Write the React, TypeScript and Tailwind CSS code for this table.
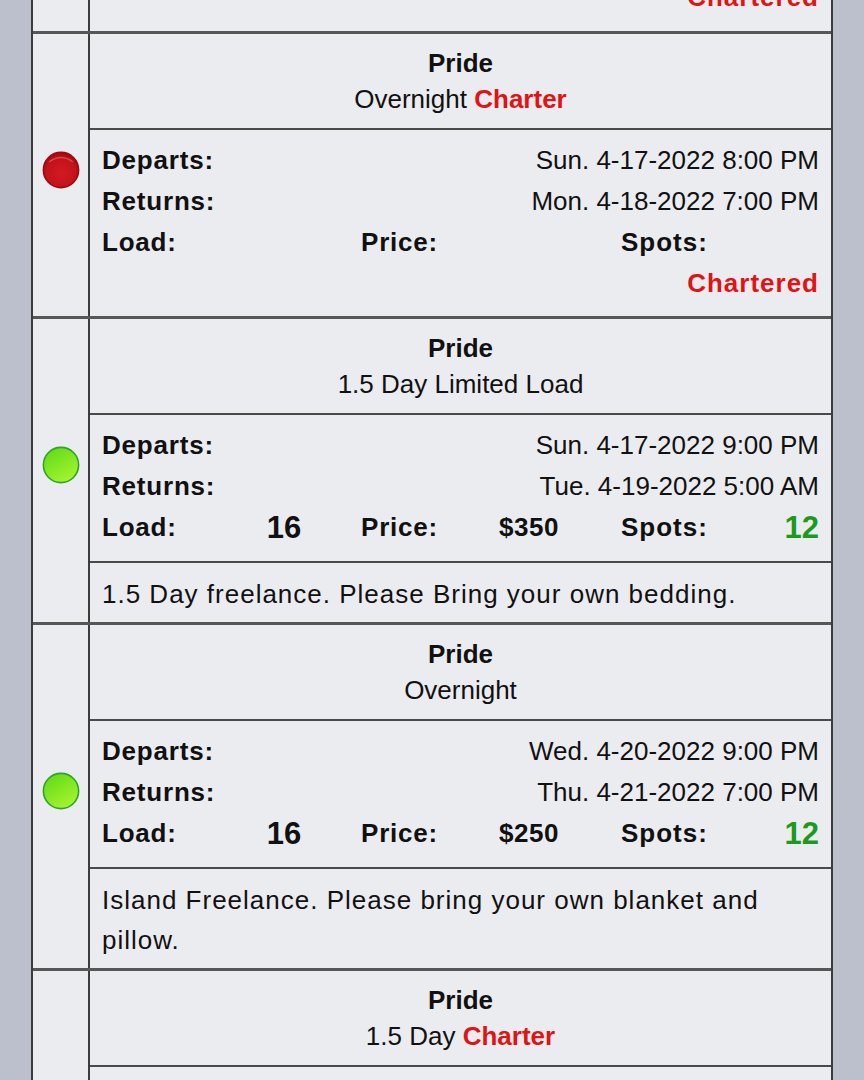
import React from "react";

type Trip = {
  status: "red" | "green";
  title: React.ReactNode;
  departs: string;
  returns: string;
  load?: string;
  price?: string;
  spots?: string;
  chartered?: boolean;
  note?: string;
};

const trips: Trip[] = [
  {
    status: "red",
    title: (
      <>
        Overnight <span className="font-bold text-[#e01414]">Charter</span>
      </>
    ),
    departs: "Sun. 4-17-2022 8:00 PM",
    returns: "Mon. 4-18-2022 7:00 PM",
    chartered: true,
  },
  {
    status: "green",
    title: "1.5 Day Limited Load",
    departs: "Sun. 4-17-2022 9:00 PM",
    returns: "Tue. 4-19-2022 5:00 AM",
    load: "16",
    price: "$350",
    spots: "12",
    note: "1.5 Day freelance. Please Bring your own bedding.",
  },
  {
    status: "green",
    title: "Overnight",
    departs: "Wed. 4-20-2022 9:00 PM",
    returns: "Thu. 4-21-2022 7:00 PM",
    load: "16",
    price: "$250",
    spots: "12",
    note: "Island Freelance. Please bring your own blanket and pillow.",
  },
  {
    status: "red",
    title: (
      <>
        1.5 Day <span className="font-bold text-[#e01414]">Charter</span>
      </>
    ),
    departs: "Fri. 4-22-2022 9:00 PM",
    returns: "Sun. 4-24-2022 5:00 AM",
    chartered: true,
  },
];

function Dot({ color }: { color: "red" | "green" }) {
  const red = color === "red";
  const id = red ? "dotRed" : "dotGreen";
  return (
    <svg width="38" height="38" viewBox="0 0 38 38">
      <defs>
        {red ? (
          <radialGradient id={id} cx="50%" cy="60%" r="55%">
            <stop offset="0%" stopColor="#d41a22" />
            <stop offset="80%" stopColor="#c2121a" />
            <stop offset="100%" stopColor="#a80c12" />
          </radialGradient>
        ) : (
          <linearGradient id={id} x1="0" y1="0" x2="0.6" y2="1">
            <stop offset="0%" stopColor="#5cd815" />
            <stop offset="100%" stopColor="#a2f42e" />
          </linearGradient>
        )}
      </defs>
      <circle
        cx="19"
        cy="19"
        r="17.6"
        fill={`url(#${id})`}
        stroke={red ? "#9c0a10" : "#2ea42a"}
        strokeWidth="1.6"
      />
      {red && (
        <path
          d="M7 11 Q19 2 31 11"
          fill="none"
          stroke="#f07078"
          strokeOpacity="0.55"
          strokeWidth="1.4"
        />
      )}
    </svg>
  );
}

function StatsRow({ trip }: { trip: Trip }) {
  return (
    <div className="grid grid-cols-[136px_92px_150px_98px_1fr] h-[41px] items-center">
      <span className="font-bold tracking-[0.8px]">Load:</span>
      <span className="text-center text-[31px] font-bold">{trip.load}</span>
      <span className="pl-[31px] font-bold tracking-[0.8px]">Price:</span>
      <span className="text-center font-bold tracking-[0.5px]">{trip.price}</span>
      <div className="flex items-center justify-between pl-[43px]">
        <span className="font-bold tracking-[1px]">Spots:</span>
        <span className="text-[31px] font-bold text-[#1c9a1c]">{trip.spots}</span>
      </div>
    </div>
  );
}

function TripRow({ trip }: { trip: Trip }) {
  return (
    <div className="flex border-t-[3px] border-[#575757]">
      <div className="w-[57px] shrink-0 border-r-2 border-[#3c3c3c] flex items-center justify-center">
        <div className="mb-[11px]">
          <Dot color={trip.status} />
        </div>
      </div>
      <div className="flex-1 flex flex-col">
        <div className="pt-[11px] pb-[11px] text-center leading-[36px] border-b-2 border-[#4a4a4a]">
          <div className="font-bold">Pride</div>
          <div>{trip.title}</div>
        </div>
        <div className="px-[12px] pt-[10px] pb-[13px] leading-[41px]">
          <div className="flex justify-between">
            <span className="font-bold tracking-[0.8px]">Departs:</span>
            <span>{trip.departs}</span>
          </div>
          <div className="flex justify-between">
            <span className="font-bold tracking-[0.8px]">Returns:</span>
            <span>{trip.returns}</span>
          </div>
          <StatsRow trip={trip} />
          {trip.chartered && (
            <div className="text-right font-bold tracking-[1px] leading-[40px] text-[#e01414]">
              Chartered
            </div>
          )}
        </div>
        {trip.note && (
          <div className="border-t-2 border-[#4a4a4a] px-[12px] pt-[11px] pb-[8px] leading-[40px] tracking-[1px]">
            {trip.note}
          </div>
        )}
      </div>
    </div>
  );
}

export default function App() {
  return (
    <div className="min-h-screen bg-[#bcc0cc] px-[31px] font-['Liberation_Sans',Arial,sans-serif] text-[26px] text-[#111]">
      <div className="border-x-2 border-[#3c3c3c] bg-[#ebecf0]">
        {/* tail end of the previous trip */}
        <div className="flex h-[31px]">
          <div className="w-[57px] shrink-0 border-r-2 border-[#3c3c3c]"></div>
          <div className="flex-1 overflow-hidden px-[12px]">
            <div className="-mt-[23px] text-right font-bold tracking-[1px] leading-[41px] text-[#e01414]">
              Chartered
            </div>
          </div>
        </div>
        {trips.map((t, i) => (
          <TripRow key={i} trip={t} />
        ))}
      </div>
    </div>
  );
}
